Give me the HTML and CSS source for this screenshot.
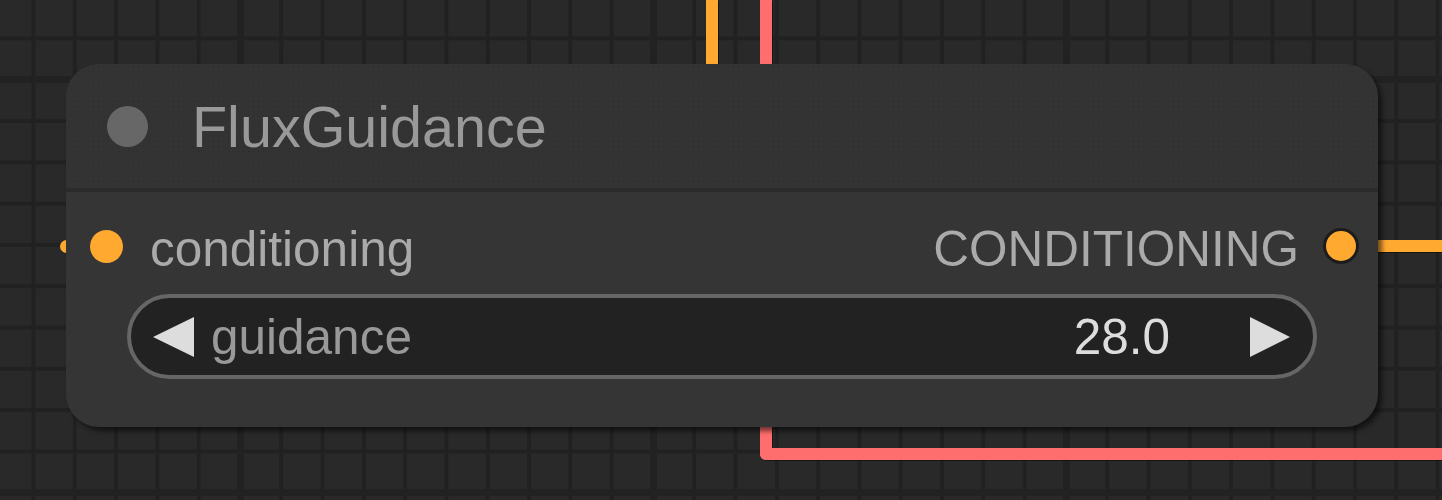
FILE: index.html
```html
<!DOCTYPE html>
<html lang="en">
<head>
<meta charset="utf-8">
<title>FluxGuidance</title>
<link rel="stylesheet" href="styles.css">
</head>
<body>
<div class="canvas">
  <div class="link link-orange link-top-orange"></div>
  <div class="link link-red link-top-red"></div>
  <div class="link-red-bend"></div>
  <div class="link link-orange link-out"></div>
  <div class="link-in-stub"></div>

  <div class="node">
    <div class="node-header">
      <span class="node-status"></span>
      <span class="node-title">FluxGuidance</span>
    </div>
    <div class="node-body">
      <div class="slot-row">
        <div class="slot slot-in">
          <span class="slot-dot"></span>
          <span class="slot-label">conditioning</span>
        </div>
        <div class="slot slot-out">
          <span class="slot-label">CONDITIONING</span>
          <span class="slot-dot slot-dot-out"></span>
        </div>
      </div>
      <div class="widget">
        <svg class="arrow" width="41" height="40" viewBox="0 0 41 40"><polygon points="0,20 41,0 41,40" fill="#dddddd"/></svg>
        <span class="widget-label">guidance</span>
        <span class="widget-value">28.0</span>
        <svg class="arrow arrow-right" width="40" height="40" viewBox="0 0 40 40"><polygon points="40,20 0,0 0,40" fill="#dddddd"/></svg>
      </div>
    </div>
  </div>
</div>
</body>
</html>
```

FILE: styles.css
```css
html, body {
  margin: 0;
  padding: 0;
}

body {
  width: 1442px;
  height: 500px;
  overflow: hidden;
  background: #282828;
  font-family: "Liberation Sans", Arial, sans-serif;
}

.canvas {
  position: relative;
  width: 1442px;
  height: 500px;
  overflow: hidden;
  background-color: #292929;
  background-image:
    linear-gradient(to right, #222222 7px, transparent 7px),
    linear-gradient(to bottom, #222222 7px, transparent 7px),
    linear-gradient(to right, #212121 4px, transparent 4px),
    linear-gradient(to bottom, #212121 4px, transparent 4px);
  background-size: 413px 413px, 413px 413px, 41.3px 41.3px, 41.3px 41.3px;
  background-position: 237px 0, 0 76px, 31.5px 0, 0 36.5px;
}

.link {
  position: absolute;
  filter: drop-shadow(1px 1px 0 rgba(0, 0, 0, 0.45));
}

.link-orange { background: #ffa931; }
.link-red { background: #ff6e6e; }

.link-top-orange {
  left: 706px;
  top: 0;
  width: 12px;
  height: 90px;
}

.link-top-red {
  left: 760px;
  top: 0;
  width: 12px;
  height: 90px;
}

.link-red-bend {
  position: absolute;
  left: 760px;
  top: 400px;
  width: 700px;
  height: 48px;
  border-left: 12px solid #ff6e6e;
  border-bottom: 12px solid #ff6e6e;
  border-bottom-left-radius: 6px;
  filter: drop-shadow(1px 1px 0 rgba(0, 0, 0, 0.45));
}

.link-out {
  left: 1360px;
  top: 239.5px;
  width: 100px;
  height: 12px;
}

.link-in-stub {
  position: absolute;
  left: 59.5px;
  top: 239.5px;
  width: 13px;
  height: 13px;
  border-radius: 50%;
  background: #ffa931;
}

.node {
  position: absolute;
  left: 66px;
  top: 64px;
  width: 1312px;
  height: 363px;
  border-radius: 33px;
  background: #353535;
  box-shadow: 4px 4px 5px rgba(0, 0, 0, 0.55);
  display: flex;
  flex-direction: column;
  overflow: hidden;
}

.node-header {
  height: 124px;
  flex: none;
  display: flex;
  align-items: center;
  padding-left: 41px;
  gap: 44px;
  background-color: #333333;
  background-image: radial-gradient(circle, rgba(0, 0, 0, 0.14) 0.7px, transparent 1px);
  background-size: 5px 5px;
  border-bottom: 4px solid #2b2b2b;
}

.node-status {
  width: 41px;
  height: 41px;
  border-radius: 50%;
  background: #676767;
  flex: none;
}

.node-title {
  color: #999999;
  font-size: 57.5px;
  line-height: 124px;
  padding-top: 2px;
  white-space: nowrap;
}

.node-body {
  flex: 1;
  display: flex;
  flex-direction: column;
  padding: 30px 0 0 0;
}

.slot-row {
  height: 48px;
  display: flex;
  align-items: center;
  justify-content: space-between;
}

.slot {
  display: flex;
  align-items: center;
}

.slot-in {
  padding-left: 24px;
  gap: 27px;
}

.slot-out {
  padding-right: 19px;
  gap: 24px;
}

.slot-dot {
  width: 33px;
  height: 33px;
  border-radius: 50%;
  background: #ffa931;
  flex: none;
}

.slot-dot-out {
  width: 30px;
  height: 30px;
  border: 3.5px solid #1c1c1c;
}

.slot-label {
  color: #aaaaaa;
  font-size: 49.5px;
  line-height: 48px;
  padding-top: 5px;
  white-space: nowrap;
}

.widget {
  margin: 24px 61px 0 61px;
  height: 85px;
  box-sizing: border-box;
  border: 4px solid #666666;
  border-radius: 43px;
  background: #222222;
  display: flex;
  align-items: center;
  padding: 0 23px 0 22px;
}

.arrow {
  flex: none;
  display: block;
}

.widget-label {
  margin-left: 17px;
  color: #999999;
  font-size: 49.5px;
  line-height: 60px;
  white-space: nowrap;
}

.widget-value {
  margin-left: auto;
  margin-right: 80px;
  color: #dddddd;
  font-size: 49.5px;
  line-height: 60px;
  white-space: nowrap;
}
```
